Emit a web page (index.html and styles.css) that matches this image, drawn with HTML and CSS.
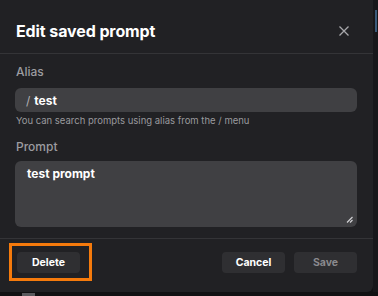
FILE: index.html
```html
<!DOCTYPE html>
<html>
<head>
<meta charset="utf-8">
<link rel="stylesheet" href="styles.css">
</head>
<body>
<div class="screen">
  <div class="row">
    <div class="dialog">
      <div class="header">
        <div class="title">Edit saved prompt</div>
        <svg class="close" width="12" height="12" viewBox="0 0 12 12"><path d="M1.5 1.5 L10.5 10.5 M10.5 1.5 L1.5 10.5" stroke="#a8a8ac" stroke-width="1.3" fill="none"/></svg>
      </div>
      <div class="content">
        <div class="label">Alias</div>
        <div class="input"><span class="slash">/</span><span class="value">test</span></div>
        <div class="help">You can search prompts using alias from the / menu</div>
        <div class="label label-prompt">Prompt</div>
        <div class="textarea">
          <span class="value">test prompt</span>
          <svg class="grip" width="7" height="7" viewBox="0 0 7 7"><path d="M6.5 1 L1 6.5 M6.5 4 L4 6.5" stroke="#d0d0d4" stroke-width="1.2"/></svg>
        </div>
      </div>
      <div class="footer">
        <button class="btn">Delete</button>
        <div class="spacer"></div>
        <button class="btn">Cancel</button>
        <button class="btn btn-disabled">Save</button>
        <div class="highlight"></div>
      </div>
    </div>
    <div class="side"><div class="side-mark"></div></div>
  </div>
  <div class="bottom"><div class="bottom-mark"></div></div>
</div>
</body>
</html>
```
FILE: styles.css
```css
html, body {
  margin: 0;
  padding: 0;
  background: #111113;
  width: 378px;
  height: 296px;
  overflow: hidden;
  font-family: Inter, "Noto Sans", "Liberation Sans", sans-serif;
}
.screen {
  display: flex;
  flex-direction: column;
  width: 378px;
  height: 296px;
}
.row {
  display: flex;
  height: 292px;
}
.dialog {
  width: 373px;
  height: 292px;
  background: #212124;
  border-bottom-right-radius: 6px;
  display: flex;
  flex-direction: column;
  position: relative;
}
.header {
  height: 54px;
  box-sizing: border-box;
  border-bottom: 1px solid #343437;
  display: flex;
  align-items: center;
  padding: 8px 23px 0 16px;
}
.title {
  flex: 1;
  color: #ffffff;
  font-size: 16px;
  font-weight: 700;
  letter-spacing: -0.1px;
}
.close {
  display: block;
}
.content {
  padding: 10px 16px 0 15px;
  display: flex;
  flex-direction: column;
  height: 185px;
  box-sizing: border-box;
  border-bottom: 1px solid #343437;
}
.label {
  color: #9c9ca0;
  font-size: 12px;
  line-height: 16px;
  padding-left: 1px;
  font-weight: 500;
}
.label-prompt {
  margin-top: 12px;
}
.input {
  margin-top: 8px;
  height: 24px;
  border-radius: 6px;
  background: #404043;
  display: flex;
  align-items: center;
  padding-left: 11px;
  font-size: 12px;
}
.slash {
  color: #b0b0b4;
  margin-right: 4px;
}
.value {
  color: #ffffff;
  font-weight: 700;
  font-size: 12px;
}
.help {
  margin-top: 3px;
  color: #9a9a9e;
  font-size: 9.5px;
  line-height: 12px;
  padding-left: 1px;
}
.textarea {
  margin-top: 6px;
  height: 66px;
  border-radius: 6px;
  background: #404043;
  padding: 3px 12px;
  box-sizing: border-box;
  position: relative;
  line-height: 16px;
}
.grip {
  position: absolute;
  right: 4px;
  bottom: 4px;
}
.footer {
  flex: 1;
  display: flex;
  align-items: flex-start;
  padding: 13px 16px 0 17px;
  gap: 9px;
  position: relative;
}
.spacer {
  flex: 1;
}
.btn {
  width: 63px;
  height: 21px;
  border: none;
  border-radius: 4px;
  background: #2f2f32;
  color: #ffffff;
  font-family: Inter, "Noto Sans", "Liberation Sans", sans-serif;
  font-size: 10.5px;
  font-weight: 700;
  padding: 0;
}
.btn-disabled {
  color: #8a8a8e;
}
.highlight {
  position: absolute;
  left: 9px;
  top: 4px;
  width: 83px;
  height: 38px;
  box-sizing: border-box;
  border: 3px solid #f57a0c;
}
.side {
  flex: 1;
  background: #17171a;
  position: relative;
}
.side-mark {
  position: absolute;
  left: 2px;
  top: 10px;
  width: 2px;
  height: 22px;
  background: #3a5a7a;
}
.bottom {
  flex: 1;
  background: #111113;
  position: relative;
}
.bottom-mark {
  position: absolute;
  left: 22px;
  top: 1px;
  width: 13px;
  height: 3px;
  background: #5a5a5e;
}
```
